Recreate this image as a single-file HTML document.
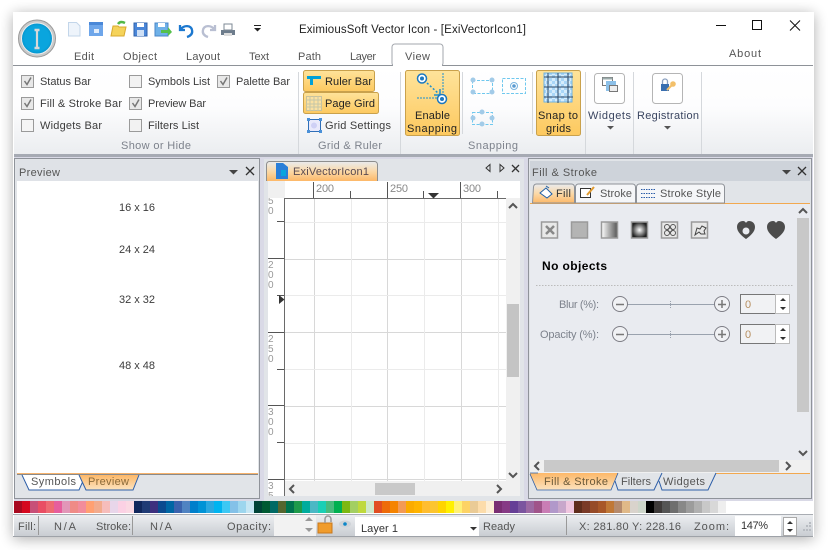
<!DOCTYPE html>
<html><head><meta charset="utf-8"><style>
html,body{margin:0;padding:0;background:#fff;width:829px;height:550px;overflow:hidden}
svg{position:absolute;left:0;top:0;fill:#3c3c3c}
text{font-family:"Liberation Sans",sans-serif;font-size:11px}
.g{fill:#7d828c}.m{fill:#555}
</style></head><body>
<svg width="829" height="550" viewBox="0 0 829 550" xmlns="http://www.w3.org/2000/svg">
<defs>
<linearGradient id="rib" x1="0" y1="0" x2="0" y2="1"><stop offset="0" stop-color="#fff"/><stop offset=".45" stop-color="#fdfdfe"/><stop offset="1" stop-color="#ebedf0"/></linearGradient>
<linearGradient id="or" x1="0" y1="0" x2="0" y2="1"><stop offset="0" stop-color="#fee39a"/><stop offset="1" stop-color="#fdc95f"/></linearGradient>
<linearGradient id="tab" x1="0" y1="0" x2="0" y2="1"><stop offset="0" stop-color="#e9ebee"/><stop offset=".5" stop-color="#fbd9a8"/><stop offset="1" stop-color="#fdb868"/></linearGradient>
<linearGradient id="tabb" x1="0" y1="0" x2="0" y2="1"><stop offset="0" stop-color="#fdb868"/><stop offset="1" stop-color="#fbe3c0"/></linearGradient>
<linearGradient id="st" x1="0" y1="0" x2="0" y2="1"><stop offset="0" stop-color="#eceef1"/><stop offset="1" stop-color="#c9cdd2"/></linearGradient>
<linearGradient id="gr" x1="0" y1="0" x2="1" y2="0"><stop offset="0" stop-color="#fff"/><stop offset="1" stop-color="#555"/></linearGradient>
<radialGradient id="rg"><stop offset="0" stop-color="#fff"/><stop offset="1" stop-color="#222"/></radialGradient>
<radialGradient id="logo" cx=".5" cy=".5" r=".5"><stop offset=".8" stop-color="#0aa5de"/><stop offset="1" stop-color="#0793cb"/></radialGradient>
<filter id="sh" x="-5%" y="-5%" width="110%" height="110%"><feGaussianBlur stdDeviation="7"/></filter>
<pattern id="chk" width="6" height="6" patternUnits="userSpaceOnUse"><rect width="6" height="6" fill="#a9d6f7"/><rect width="3" height="3" fill="#d5ecfb"/><rect x="3" y="3" width="3" height="3" fill="#d5ecfb"/></pattern>
</defs>

<!-- window -->
<rect x="13" y="14" width="801" height="525" fill="#000" opacity=".32" filter="url(#sh)"/>
<rect x="13" y="12" width="801" height="525" fill="#fff"/>
<rect x="13" y="65" width="800" height="1" fill="#8e9298"/>
<rect x="14" y="66" width="799" height="88" fill="url(#rib)"/>
<rect x="14" y="154" width="799" height="3" fill="#a6aab3"/>
<rect x="14" y="157" width="799" height="344" fill="#d9d9e6"/>
<rect x="392" y="44" width="51" height="22" rx="3" fill="#fff" stroke="#a3a7ad"/><rect x="393" y="64" width="49" height="3" fill="#fff"/>

<!-- logo -->
<circle cx="37" cy="38.500" r="18.500" fill="#c9c9c9" stroke="#9a9a9a"/>
<circle cx="37" cy="38.500" r="15.500" fill="url(#logo)" stroke="#eee"/>
<path d="M34.500 30h5M34.500 48h5" stroke="#d8d8d8" stroke-width="2.500" fill="none"/><path d="M37 30v18" stroke="#d8d8d8" stroke-width="2.200" fill="none"/>

<!-- QAT -->
<path d="M68.500 22.500h8l3.500 3.500v10h-11.500z" fill="#eef4fb" stroke="#c3d6ea"/>
<rect x="89" y="22" width="14" height="14" fill="#6ea6ea"/><rect x="89" y="22" width="14" height="3" fill="#4a88d8"/><rect x="94" y="29" width="5" height="4" fill="#fff" opacity=".8"/>
<path d="M111 36l2-10h5l1 1h7l-2 9z" fill="#f5d35a" stroke="#d8a92e"/><path d="M118 24c2-3 5-2 7-1" stroke="#53b848" stroke-width="2.500" fill="none"/>
<rect x="134" y="23" width="13" height="13" fill="#4a86d8" stroke="#2e62ad"/><rect x="137" y="23" width="7" height="4" fill="#fff"/><rect x="137" y="30" width="7" height="6" fill="#cfe0f5"/>
<rect x="155" y="23" width="13" height="13" fill="#6fb1e8" stroke="#4a86c8"/><rect x="158" y="23" width="7" height="4" fill="#fff"/><path d="M161 30h7v-3l4 5-4 4v-3h-7z" fill="#55c04c"/>
<path d="M180 25v5h5M181 29c3-4 10-4 11 1 1 4-2 6-5 7" stroke="#1c78cf" stroke-width="2.300" fill="none"/>
<path d="M215 25v5h-5M214 29c-3-4-10-4-11 1-1 4 2 6 5 7" stroke="#b9bfd2" stroke-width="2.300" fill="none"/>
<rect x="221" y="30" width="14" height="5" fill="#6d7c8c"/><rect x="224" y="24" width="8" height="6" fill="#fff" stroke="#7d8894"/><rect x="224" y="33" width="8" height="3" fill="#ddd"/>
<rect x="254" y="25" width="7" height="1" fill="#222"/><path d="M254 28h7l-3.500 3.500z" fill="#222"/>

<!-- title -->
<text x="299" y="33" style="font-size:11.500px" fill="#222" textLength="227">EximiousSoft Vector Icon - [ExiVectorIcon1]</text>
<rect x="716" y="25" width="10" height="1" fill="#111"/>
<rect x="752.500" y="20.500" width="9" height="9" fill="none" stroke="#111"/>
<path d="M790 20.500l10 10M800 20.500l-10 10" stroke="#111" fill="none"/>

<!-- tabs -->
<text x="74" y="60" class="m" textLength="20">Edit</text>
<text x="123" y="60" class="m" textLength="34">Object</text>
<text x="186" y="60" class="m" textLength="34">Layout</text>
<text x="249" y="60" class="m" textLength="20">Text</text>
<text x="298" y="60" class="m" textLength="23">Path</text>
<text x="350" y="60" class="m" textLength="26">Layer</text>
<text x="405" y="60" class="m" textLength="25">View</text>
<text x="729" y="57" class="m" textLength="32">About</text>

<!-- checkboxes -->
<g fill="#fff" stroke="#9a9a9a">
<rect x="21.500" y="75.500" width="12" height="12" fill="#e8e8e8"/><rect x="21.500" y="97.500" width="12" height="12" fill="#e8e8e8"/><rect x="21.500" y="119.500" width="12" height="12" fill="#f5f5f5"/>
<rect x="129.500" y="75.500" width="12" height="12" fill="#f2f2f2"/><rect x="129.500" y="97.500" width="12" height="12" fill="#e8e8e8"/><rect x="129.500" y="119.500" width="12" height="12" fill="#f2f2f2"/>
<rect x="217.500" y="75.500" width="12" height="12" fill="#e8e8e8"/>
</g>
<g fill="none" stroke="#777" stroke-width="1.500">
<path d="M24.500 81l2.500 3.500 4-7"/><path d="M24.500 103l2.500 3.500 4-7"/><path d="M132.500 103l2.500 3.500 4-7"/><path d="M220.500 81l2.500 3.500 4-7"/>
</g>
<text x="40" y="85" textLength="51">Status Bar</text>
<text x="40" y="107" textLength="82">Fill &amp; Stroke Bar</text>
<text x="40" y="129" textLength="62">Widgets Bar</text>
<text x="148" y="85" textLength="62">Symbols List</text>
<text x="148" y="107" textLength="58">Preview Bar</text>
<text x="148" y="129" textLength="51">Filters List</text>
<text x="236" y="85" textLength="54">Palette Bar</text>
<text x="121" y="149" class="g" textLength="70">Show or Hide</text>

<!-- separators -->
<g fill="#d5d8dc"><rect x="298" y="72" width="1" height="82"/><rect x="400" y="72" width="1" height="82"/><rect x="462" y="72" width="1" height="62"/><rect x="532" y="72" width="1" height="62"/><rect x="585" y="72" width="1" height="82"/><rect x="633" y="72" width="1" height="82"/><rect x="701" y="72" width="1" height="82"/></g>

<!-- Grid & Ruler -->
<rect x="303.500" y="70.500" width="71" height="21" rx="2" fill="url(#or)" stroke="#c9a14c"/>
<rect x="303.500" y="92.500" width="75" height="21" rx="2" fill="url(#or)" stroke="#c9a14c"/>
<path d="M307 76h14v3h-8v6h-3v-6h-3z" fill="#00a0d8"/>
<rect x="306.500" y="96.500" width="15" height="14" fill="#fbe1a2" stroke="#c8c29c"/>
<path d="M310 96v15M314 96v15M318 96v15M306 100h16M306 104h16M306 107h16" stroke="#c6c6a8" fill="none"/>
<rect x="308.500" y="119.500" width="12" height="12" fill="#e9e9fb" stroke="#2f6fb8"/><rect x="307" y="118" width="3" height="3" fill="#4a90d8"/><rect x="319" y="118" width="3" height="3" fill="#4a90d8"/><rect x="307" y="130" width="3" height="3" fill="#4a90d8"/><rect x="319" y="130" width="3" height="3" fill="#4a90d8"/><circle cx="314" cy="125.500" r="3" fill="#cfd0f5"/>
<text x="325" y="85" fill="#222" textLength="47">Ruler Bar</text>
<text x="325" y="107" fill="#222" textLength="50">Page Gird</text>
<text x="325" y="129" textLength="66">Grid Settings</text>
<text x="318" y="149" class="g" textLength="64">Grid &amp; Ruler</text>

<!-- Snapping -->
<rect x="405.500" y="70.500" width="54" height="65" rx="2" fill="url(#or)" stroke="#c9a14c"/>
<path d="M443 73v22M417 98h24" stroke="#1c8fcf" stroke-dasharray="2 1" fill="none"/>
<path d="M427 83l12 11" stroke="#1c8fcf" stroke-width="1.500" stroke-dasharray="2 2" fill="none"/><path d="M434 95h6v-6" stroke="#1c8fcf" stroke-width="1.500" fill="none"/>
<circle cx="422" cy="78.500" r="4.500" fill="#fff" stroke="#1c78c0" stroke-width="1.500"/><circle cx="422" cy="78.500" r="2" fill="#1c78c0"/>
<circle cx="442" cy="99" r="4.500" fill="#fff" stroke="#1c78c0" stroke-width="1.500"/><circle cx="442" cy="99" r="2" fill="#1c78c0"/>
<text x="415" y="119" fill="#222" textLength="35">Enable</text>
<text x="407" y="132" fill="#222" textLength="50">Snapping</text>
<rect x="472.500" y="80.500" width="20" height="13" fill="none" stroke="#6fc8ee" stroke-dasharray="3 1.500"/>
<g fill="#a2cbe8"><circle cx="473" cy="80" r="2.500"/><circle cx="492" cy="80" r="2.500"/><circle cx="473" cy="92" r="2.500"/><circle cx="492" cy="92" r="2.500"/></g>
<rect x="502.500" y="78.500" width="23" height="15" fill="none" stroke="#6fc8ee" stroke-dasharray="3 1.500"/>
<circle cx="514" cy="86" r="3.500" fill="none" stroke="#7ab4e0"/><circle cx="514" cy="86" r="1.800" fill="#5a9ad0"/>
<rect x="472.500" y="112.500" width="20" height="12" fill="none" stroke="#6fc8ee" stroke-dasharray="3 1.500"/>
<g fill="#a2cbe8"><circle cx="482" cy="112" r="2.500"/><circle cx="482" cy="124" r="2.500"/><circle cx="473" cy="118" r="2.500"/><circle cx="492" cy="118" r="2.500"/></g>
<rect x="536.500" y="70.500" width="44" height="65" rx="2" fill="url(#or)" stroke="#c9a14c"/>
<rect x="544" y="73" width="28" height="29" fill="url(#chk)" stroke="#6fb1e0"/>
<path d="M548 73v30M558 73v30M568 73v30M544 77h29M544 87h29M544 97h29" stroke="#2c4764" fill="none"/>
<text x="538" y="119" fill="#222" textLength="40">Snap to</text>
<text x="546" y="132" fill="#222" textLength="25">grids</text>
<text x="468" y="149" class="g" textLength="50">Snapping</text>

<!-- widgets / registration -->
<rect x="594.500" y="73.500" width="30" height="30" rx="3" fill="#fff" stroke="#b5b5b5"/>
<rect x="602.500" y="77.500" width="10" height="8" fill="#fff" stroke="#777"/><rect x="602.500" y="77.500" width="10" height="2" fill="#9aa"/>
<rect x="606" y="81" width="10" height="10" fill="#8cc0e8"/>
<rect x="609.500" y="85.500" width="8" height="6" fill="#eee" stroke="#777"/>
<text x="588" y="119" fill="#3a4560" textLength="43">Widgets</text>
<path d="M607 126h7l-3.500 3.500z" fill="#555"/>
<rect x="652.500" y="73.500" width="30" height="30" rx="3" fill="#fff" stroke="#b5b5b5"/>
<rect x="661" y="84" width="8" height="7" fill="#3a6fb0"/><path d="M662.500 84v-2.500a2.500 2.500 0 0 1 5 0v2.500" stroke="#8aa0c0" fill="none" stroke-width="1.300"/>
<path d="M667 90l5-5" stroke="#f3c06a" stroke-width="2"/><circle cx="673" cy="84" r="2.800" fill="#f3c06a"/>
<text x="637" y="119" fill="#3a4560" textLength="62">Registration</text>
<path d="M664 126h7l-3.500 3.500z" fill="#555"/>

<!-- Preview panel -->
<rect x="14.500" y="158.500" width="245" height="340" fill="#e1e4e8" stroke="#8f939a"/>
<rect x="16" y="160" width="242" height="21" fill="#dfe2e7"/>
<rect x="17" y="181" width="241" height="293" fill="#fff"/>
<rect x="17" y="474" width="241" height="1" fill="#8a8a8a"/><rect x="17" y="473" width="241" height="1" fill="#f6b26b"/>
<text x="19" y="176" class="m" textLength="41">Preview</text>
<path d="M229 170h9l-4.500 4.500z" fill="#444"/>
<path d="M246 167l8 8M254 167l-8 8" stroke="#333" stroke-width="1.300" fill="none"/>
<text x="119" y="211" textLength="36">16 x 16</text>
<text x="119" y="253" textLength="36">24 x 24</text>
<text x="119" y="303" textLength="36">32 x 32</text>
<text x="119" y="369" textLength="36">48 x 48</text>
<path d="M22 475l7 15h50l4-9-4-6z" fill="#fff" stroke="none"/>
<path d="M22 475l7 15h50l4-9" fill="none" stroke="#2e5fa8"/>
<path d="M79 475l7 15h47l6-15z" fill="url(#tabb)"/>
<path d="M79 475l7 15h47l6-15" fill="none" stroke="#2e5fa8"/>
<text x="31" y="485" class="m" textLength="45">Symbols</text>
<text x="88" y="485" fill="#8a6a3a" textLength="41">Preview</text>

<!-- Doc area -->
<rect x="264" y="159" width="260" height="342" fill="#e1e4e8"/>
<path d="M266.500 181v-16.500a3 3 0 0 1 3-3h105a3 3 0 0 1 3 3v16.500" fill="url(#tab)" stroke="#8e8e8e"/>
<path d="M276 163h7l5 4v12h-12z" fill="#2b7fd8"/><rect x="281" y="170" width="5" height="6" fill="#0aa5de"/>
<text x="293" y="175" fill="#5a4a50" textLength="76">ExiVectorIcon1</text>
<path d="M490 164.500v7l-4-3.500z" fill="none" stroke="#333"/><path d="M500 164.500v7l4-3.500z" fill="none" stroke="#333"/>
<path d="M512 165l7 7M519 165l-7 7" stroke="#333" stroke-width="1.300" fill="none"/>
<rect x="268" y="181" width="252" height="315" fill="#f0f0f0"/>
<rect x="285" y="181" width="235" height="17" fill="#fff"/>
<rect x="268" y="198" width="16" height="298" fill="#fff"/>
<rect x="285" y="199" width="221" height="282" fill="#fff"/>
<rect x="284" y="198" width="222" height="1" fill="#6a6a6a"/><rect x="284" y="198" width="1" height="298" fill="#6a6a6a"/>
<g fill="#555"><rect x="313" y="182" width="1" height="16"/><rect x="350" y="191" width="1" height="7"/><rect x="387" y="182" width="1" height="16"/><rect x="423" y="191" width="1" height="7"/><rect x="460" y="182" width="1" height="16"/><rect x="497" y="191" width="1" height="7"/>
<rect x="268" y="258" width="16" height="1"/><rect x="277" y="221" width="7" height="1"/><rect x="277" y="295" width="7" height="1"/><rect x="268" y="405" width="16" height="1"/><rect x="277" y="442" width="7" height="1"/><rect x="268" y="332" width="16" height="1"/><rect x="277" y="369" width="7" height="1"/><rect x="268" y="479" width="16" height="1"/></g>
<text x="316" y="192" fill="#888" textLength="18">200</text><text x="390" y="192" fill="#888" textLength="18">250</text><text x="463" y="192" fill="#888" textLength="18">300</text>
<path d="M428 193h11l-5.500 5.500z" fill="#333"/><path d="M279 295v9l5.500-4.500z" fill="#333"/>
<text x="268" y="204" fill="#999" style="font-size:10px">5</text><text x="268" y="214" fill="#999" style="font-size:10px">0</text>
<text x="268" y="268" fill="#999" style="font-size:10px">2</text><text x="268" y="278" fill="#999" style="font-size:10px">0</text><text x="268" y="288" fill="#999" style="font-size:10px">0</text>
<text x="268" y="342" fill="#999" style="font-size:10px">2</text><text x="268" y="352" fill="#999" style="font-size:10px">5</text><text x="268" y="362" fill="#999" style="font-size:10px">0</text>
<text x="268" y="415" fill="#999" style="font-size:10px">3</text><text x="268" y="425" fill="#999" style="font-size:10px">0</text><text x="268" y="435" fill="#999" style="font-size:10px">0</text>
<text x="268" y="489" fill="#999" style="font-size:10px">3</text><text x="268" y="499" fill="#999" style="font-size:10px">5</text>
<rect x="264" y="496" width="260" height="5" fill="#e1e4e8"/>
<rect x="268" y="181" width="16" height="17" fill="#f0f0f0"/>
<g fill="#d8d8d8"><rect x="314" y="199" width="1" height="282"/><rect x="387" y="199" width="1" height="282"/><rect x="461" y="199" width="1" height="282"/><rect x="285" y="259" width="221" height="1"/><rect x="285" y="332" width="221" height="1"/><rect x="285" y="406" width="221" height="1"/><rect x="285" y="479" width="221" height="1"/></g>
<g fill="#ebebeb"><rect x="351" y="199" width="1" height="282"/><rect x="424" y="199" width="1" height="282"/><rect x="498" y="199" width="1" height="282"/><rect x="285" y="222" width="221" height="1"/><rect x="285" y="295" width="221" height="1"/><rect x="285" y="369" width="221" height="1"/><rect x="285" y="443" width="221" height="1"/></g>
<rect x="507" y="304" width="12" height="73" fill="#c4c4c4"/>
<rect x="375" y="483" width="40" height="12" fill="#c9c9c9"/>
<path d="M509 208l4-4 4 4M509 473l4 4 4-4" stroke="#555" stroke-width="2" fill="none"/>
<path d="M294 485l-4 4 4 4M497 485l4 4-4 4" stroke="#555" stroke-width="2" fill="none"/>

<!-- Fill & Stroke panel -->
<rect x="528.500" y="158.500" width="283" height="340" fill="#e1e4e8" stroke="#8f939a"/>
<rect x="530" y="161" width="280" height="20" fill="#ced3da"/>
<text x="532" y="176" class="m" textLength="65">Fill &amp; Stroke</text>
<path d="M782 170h9l-4.500 4.500z" fill="#444"/>
<path d="M798 167l8 8M806 167l-8 8" stroke="#333" stroke-width="1.300" fill="none"/>
<rect x="530" y="203" width="280" height="1" fill="#f2a84f"/>
<rect x="530" y="204" width="280" height="256" fill="#e9ebf0"/>
<path d="M532.500 203l1-16a3 3 0 0 1 3-3h35a3 3 0 0 1 3 3v16z" fill="url(#tab)" stroke="#8e9298"/>
<path d="M575.500 203v-16a3 3 0 0 1 3-3h54a3 3 0 0 1 3 3v16z" fill="#f5f6f8" stroke="#8e9298"/>
<path d="M636.500 203v-16a3 3 0 0 1 3-3h82a3 3 0 0 1 3 3v16z" fill="#f5f6f8" stroke="#8e9298"/>
<path d="M540 193l6-5 6 6-5 4z" fill="#fff" stroke="#1f5fa8"/><path d="M546 186l3 2" stroke="#1f5fa8"/>
<text x="556" y="197" fill="#333" textLength="15">Fill</text>
<rect x="580.500" y="188.500" width="10" height="9" fill="#fff" stroke="#333"/><path d="M587 195l7-8" stroke="#e09a30" stroke-width="2"/>
<text x="600" y="197" class="m" textLength="32">Stroke</text>
<path d="M641 189.500h15M641 193.500h15M641 197.500h15" stroke="#2a5ca8" stroke-dasharray="1.500 1" fill="none"/>
<text x="660" y="197" class="m" textLength="61">Stroke Style</text>
<!-- fill mode icons -->
<g stroke="#9a9a9a" stroke-width="1.500">
<rect x="541.500" y="222" width="16" height="16" fill="#e8e8e8"/>
<rect x="571.500" y="222" width="16" height="16" fill="#b4b4b4"/>
<rect x="601.500" y="222" width="16" height="16" fill="url(#gr)"/>
<rect x="631.500" y="222" width="16" height="16" fill="url(#rg)"/>
<rect x="661.500" y="222" width="16" height="16" fill="#e8e8e8"/>
<rect x="691.500" y="222" width="16" height="16" fill="#e8e8e8"/>
</g>
<path d="M546 226l8 8M554 226l-8 8" stroke="#888" stroke-width="2.500" fill="none"/>
<g fill="none" stroke="#555"><circle cx="667" cy="227" r="2.500"/><circle cx="673" cy="227" r="2.500"/><circle cx="670" cy="230" r="2"/><circle cx="667" cy="233" r="2.500"/><circle cx="673" cy="233" r="2.500"/></g>
<path d="M695 235l2-7 3 1 2-3 4 2-2 3 1 3-4 0-2-2z" fill="none" stroke="#444"/>
<path d="M746 239c-4-3-9-7-9-12 0-4 3-6 6-6 1.500 0 2.500 1 3 2 .5-1 1.500-2 3-2 3 0 6 2 6 6 0 5-5 9-9 12z" fill="#4c4c4c"/>
<circle cx="746" cy="231" r="3.500" fill="#e9ebf0"/><path d="M744 236l2 3 2-3" fill="#4c4c4c"/>
<path d="M776 239c-4-3-9-7-9-12 0-4 3-6 6-6 1.500 0 2.500 1 3 2 .5-1 1.500-2 3-2 3 0 6 2 6 6 0 5-5 9-9 12z" fill="#4c4c4c"/>
<text x="542" y="270" style="font-size:12px;font-weight:bold" fill="#000" textLength="65">No objects</text>
<path d="M536 285.500h258" stroke="#bbb" stroke-dasharray="1.500 1.500" fill="none"/>
<text x="559" y="308" fill="#7d828c" textLength="40">Blur (%):</text>
<text x="540" y="338" fill="#7d828c" textLength="59">Opacity (%):</text>
<path d="M627 304.500h88" stroke="#9aa2ae" fill="none"/><path d="M670.500 301v7" stroke="#9aa2ae" stroke-dasharray="1 1"/>
<circle cx="620" cy="304" r="7.500" fill="#f0f1f4" stroke="#7d7d85"/><path d="M616 304.500h8" stroke="#777" stroke-width="1.500"/>
<circle cx="722" cy="304" r="7.500" fill="#f0f1f4" stroke="#7d7d85"/><path d="M718 304.500h8M722 300v8" stroke="#777" stroke-width="1.500"/>
<rect x="740.500" y="294.500" width="35" height="19" fill="#f1f2f4" stroke="#777"/>
<rect x="775.500" y="294.500" width="14" height="19" fill="#fff" stroke="#bbb"/>
<path d="M780 301h6l-3-3zM780 307h6l-3 3z" fill="#333"/>
<text x="745" y="308" fill="#b89060" textLength="7">0</text>
<path d="M627 334.500h88" stroke="#9aa2ae" fill="none"/><path d="M670.500 331v7" stroke="#9aa2ae" stroke-dasharray="1 1"/>
<circle cx="620" cy="334" r="7.500" fill="#f0f1f4" stroke="#7d7d85"/><path d="M616 334.500h8" stroke="#777" stroke-width="1.500"/>
<circle cx="722" cy="334" r="7.500" fill="#f0f1f4" stroke="#7d7d85"/><path d="M718 334.500h8M722 330v8" stroke="#777" stroke-width="1.500"/>
<rect x="740.500" y="324.500" width="35" height="19" fill="#f1f2f4" stroke="#777"/>
<rect x="775.500" y="324.500" width="14" height="19" fill="#fff" stroke="#bbb"/>
<path d="M780 331h6l-3-3zM780 337h6l-3 3z" fill="#333"/>
<text x="745" y="338" fill="#b89060" textLength="7">0</text>
<rect x="797" y="218" width="12" height="194" fill="#c8c8c8"/>
<path d="M799 213l4-4 4 4M799 451l4 4 4-4" stroke="#555" stroke-width="2" fill="none"/>
<rect x="530" y="460" width="280" height="13" fill="#f0f0f0"/>
<rect x="544" y="460" width="235" height="12" fill="#c9c9c9"/>
<path d="M539 462l-4 4 4 4M786 462l4 4-4 4" stroke="#555" stroke-width="2" fill="none"/>
<rect x="716" y="473" width="94" height="1" fill="#f2a84f"/>
<path d="M530 473h88l-7 17h-74l-7-15z" fill="url(#tabb)"/>
<path d="M530 473h5l3 0M530 474l7 16h74l7-17" fill="none" stroke="#2e5fa8" stroke-width=".8"/>
<path d="M615 481l3 9h36l8-17" fill="none" stroke="#2e5fa8"/>
<path d="M659 481l3 9h46l8-17" fill="none" stroke="#2e5fa8"/>
<text x="544" y="485" fill="#6b5a3a" textLength="64">Fill &amp; Stroke</text>
<text x="621" y="485" class="m" textLength="30">Filters</text>
<text x="663" y="485" class="m" textLength="42">Widgets</text>

<!-- palette -->
<rect x="14" y="501" width="799" height="13" fill="#fff"/>
<g>
<rect x="14" y="501" width="8" height="12" fill="#a80a20"/><rect x="22" y="501" width="8" height="12" fill="#d5081f"/><rect x="30" y="501" width="8" height="12" fill="#c74f78"/><rect x="38" y="501" width="8" height="12" fill="#e94e64"/><rect x="46" y="501" width="8" height="12" fill="#ee6a72"/><rect x="54" y="501" width="8" height="12" fill="#e65e9d"/><rect x="62" y="501" width="8" height="12" fill="#e296b8"/><rect x="70" y="501" width="8" height="12" fill="#ef8b86"/><rect x="78" y="501" width="8" height="12" fill="#f28c9b"/><rect x="86" y="501" width="8" height="12" fill="#ffa072"/><rect x="94" y="501" width="8" height="12" fill="#f2ab8d"/><rect x="102" y="501" width="8" height="12" fill="#f6bdbb"/><rect x="110" y="501" width="8" height="12" fill="#e8d6ea"/><rect x="118" y="501" width="8" height="12" fill="#fbd1e4"/><rect x="126" y="501" width="8" height="12" fill="#fad9e3"/>
<rect x="134" y="501" width="8" height="12" fill="#10275c"/><rect x="142" y="501" width="8" height="12" fill="#1f3b75"/><rect x="150" y="501" width="8" height="12" fill="#3d2f7e"/><rect x="158" y="501" width="8" height="12" fill="#0b4a8f"/><rect x="166" y="501" width="8" height="12" fill="#0066a4"/><rect x="174" y="501" width="8" height="12" fill="#3a62ad"/><rect x="182" y="501" width="8" height="12" fill="#5083c2"/><rect x="190" y="501" width="8" height="12" fill="#007fcb"/><rect x="198" y="501" width="8" height="12" fill="#0093d6"/><rect x="206" y="501" width="8" height="12" fill="#2aa8e0"/><rect x="214" y="501" width="8" height="12" fill="#00b4f0"/><rect x="222" y="501" width="8" height="12" fill="#3cc8f4"/><rect x="230" y="501" width="8" height="12" fill="#84c1e8"/><rect x="238" y="501" width="8" height="12" fill="#9dd6ee"/><rect x="246" y="501" width="8" height="12" fill="#c6e6f3"/>
<rect x="254" y="501" width="8" height="12" fill="#004337"/><rect x="262" y="501" width="8" height="12" fill="#005a32"/><rect x="270" y="501" width="8" height="12" fill="#006a65"/><rect x="278" y="501" width="8" height="12" fill="#55662f"/><rect x="286" y="501" width="8" height="12" fill="#00734e"/><rect x="294" y="501" width="8" height="12" fill="#1e9a4a"/><rect x="302" y="501" width="8" height="12" fill="#00ac9d"/><rect x="310" y="501" width="8" height="12" fill="#4bb8c5"/><rect x="318" y="501" width="8" height="12" fill="#1acfb5"/><rect x="326" y="501" width="8" height="12" fill="#47bb7d"/><rect x="334" y="501" width="8" height="12" fill="#00b050"/><rect x="342" y="501" width="8" height="12" fill="#7db812"/><rect x="350" y="501" width="8" height="12" fill="#a3cf62"/><rect x="358" y="501" width="8" height="12" fill="#bfd93c"/><rect x="366" y="501" width="8" height="12" fill="#cfe8c9"/>
<rect x="374" y="501" width="8" height="12" fill="#e14d21"/><rect x="382" y="501" width="8" height="12" fill="#ee6b0a"/><rect x="390" y="501" width="8" height="12" fill="#f58400"/><rect x="398" y="501" width="8" height="12" fill="#f39a55"/><rect x="406" y="501" width="8" height="12" fill="#fbab00"/><rect x="414" y="501" width="8" height="12" fill="#ffb400"/><rect x="422" y="501" width="8" height="12" fill="#ffbd2f"/><rect x="430" y="501" width="8" height="12" fill="#fcc52f"/><rect x="438" y="501" width="8" height="12" fill="#ffd400"/><rect x="446" y="501" width="8" height="12" fill="#fff000"/><rect x="454" y="501" width="8" height="12" fill="#fff176"/><rect x="462" y="501" width="8" height="12" fill="#fdd365"/><rect x="470" y="501" width="8" height="12" fill="#eacb96"/><rect x="478" y="501" width="8" height="12" fill="#fcdcaa"/><rect x="486" y="501" width="8" height="12" fill="#fdeed5"/>
<rect x="494" y="501" width="8" height="12" fill="#7a2e73"/><rect x="502" y="501" width="8" height="12" fill="#863a85"/><rect x="510" y="501" width="8" height="12" fill="#663f96"/><rect x="518" y="501" width="8" height="12" fill="#7b559f"/><rect x="526" y="501" width="8" height="12" fill="#9c69a3"/><rect x="534" y="501" width="8" height="12" fill="#a0548a"/><rect x="542" y="501" width="8" height="12" fill="#c97db5"/><rect x="550" y="501" width="8" height="12" fill="#b198ca"/><rect x="558" y="501" width="8" height="12" fill="#c8a7cb"/><rect x="566" y="501" width="8" height="12" fill="#efc6df"/>
<rect x="574" y="501" width="8" height="12" fill="#5f2d1c"/><rect x="582" y="501" width="8" height="12" fill="#7a3a27"/><rect x="590" y="501" width="8" height="12" fill="#964b28"/><rect x="598" y="501" width="8" height="12" fill="#a85728"/><rect x="606" y="501" width="8" height="12" fill="#c07836"/><rect x="614" y="501" width="8" height="12" fill="#b58a6c"/><rect x="622" y="501" width="8" height="12" fill="#e0b988"/><rect x="630" y="501" width="8" height="12" fill="#d9d3cc"/><rect x="638" y="501" width="8" height="12" fill="#cdd6ca"/>
<rect x="646" y="501" width="8" height="12" fill="#000"/><rect x="654" y="501" width="8" height="12" fill="#3e3a39"/><rect x="662" y="501" width="8" height="12" fill="#555"/><rect x="670" y="501" width="8" height="12" fill="#6e6e6e"/><rect x="678" y="501" width="8" height="12" fill="#888"/><rect x="686" y="501" width="8" height="12" fill="#9c9c9c"/><rect x="694" y="501" width="8" height="12" fill="#b0b0b0"/><rect x="702" y="501" width="8" height="12" fill="#c8c8c8"/><rect x="710" y="501" width="8" height="12" fill="#d8d8d8"/><rect x="718" y="501" width="8" height="12" fill="#eee"/>
</g>

<!-- status bar -->
<rect x="13" y="514" width="800" height="1" fill="#a9adb3"/>
<rect x="14" y="515" width="799" height="21" fill="url(#st)"/>
<rect x="38" y="516" width="1" height="19" fill="#999"/><rect x="132" y="516" width="1" height="19" fill="#999"/><rect x="566" y="516" width="1" height="19" fill="#999"/>
<text x="18" y="530" class="m" textLength="18">Fill:</text>
<text x="54" y="530" class="m" textLength="22">N/A</text>
<text x="96" y="530" class="m" textLength="35">Stroke:</text>
<text x="150" y="530" class="m" textLength="22">N/A</text>
<text x="227" y="530" class="m" textLength="44">Opacity:</text>
<rect x="274" y="515" width="42" height="21" fill="#f2f2f2"/>
<path d="M305 521h8l-4-4zM305 528h8l-4 4z" fill="#999"/>
<rect x="318" y="523" width="14" height="10" fill="#f09c2c" stroke="#c8781c"/>
<path d="M325 523v-4a3 3 0 0 1 6 0v3" stroke="#999" stroke-width="1.500" fill="none"/>
<ellipse cx="345" cy="524" rx="6" ry="3.500" fill="#cfd3d8"/><circle cx="345" cy="524" r="1.800" fill="#0c86c8"/>
<rect x="355" y="517" width="124" height="19" fill="#fff"/>
<text x="361" y="532" fill="#333" textLength="37">Layer 1</text>
<path d="M470 527h7l-3.500 3.500z" fill="#333"/>
<text x="483" y="530" class="m" textLength="32">Ready</text>
<text x="579" y="530" class="m" textLength="102">X: 281.80 Y: 228.16</text>
<text x="694" y="530" class="m" textLength="35">Zoom:</text>
<rect x="735" y="516" width="46" height="20" fill="#fff"/>
<text x="741" y="529" fill="#333" textLength="27">147%</text>
<rect x="783.500" y="517.500" width="13" height="18" fill="#fff" stroke="#aaa"/>
<path d="M787 524h6l-3-3zM787 529h6l-3 3z" fill="#333"/>
<g fill="#b8bcc2"><rect x="809" y="522" width="2" height="2"/><rect x="806" y="525" width="2" height="2"/><rect x="809" y="525" width="2" height="2"/><rect x="803" y="529" width="2" height="2"/><rect x="806" y="529" width="2" height="2"/><rect x="809" y="529" width="2" height="2"/></g>
<rect x="13" y="536" width="800" height="1" fill="#9ea2a8"/>
</svg>
</body></html>
